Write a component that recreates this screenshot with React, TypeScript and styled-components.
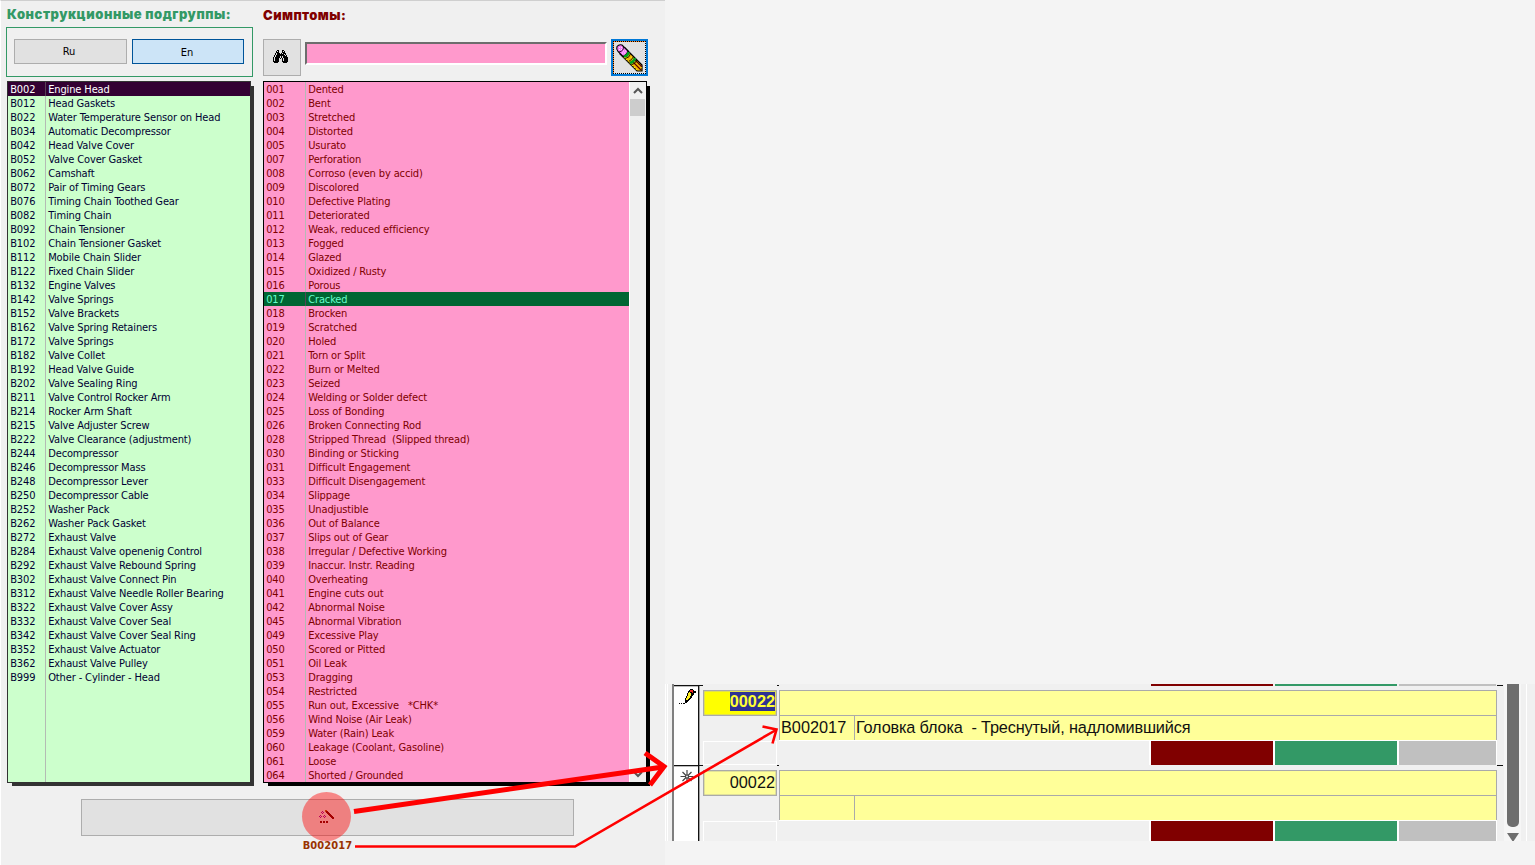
import React from 'react';
import styled, { createGlobalStyle } from 'styled-components';

const Global = createGlobalStyle`
  * { box-sizing: border-box; }
  body { margin: 0; background: #f4f4f4; overflow: hidden; }
`;

const ui = `'DejaVu Sans Condensed', 'DejaVu Sans', sans-serif`;

const Screen = styled.div`
  position: relative;
  display: flex;
  width: 1535px;
  height: 865px;
  overflow: hidden;
  background: #f4f4f4;
  font-family: ${ui};
  font-size: 11px;
  letter-spacing: -0.13px;
`;

const Dialog = styled.main`
  width: 665px;
  height: 865px;
  flex: none;
  background: #f0f0f0;
  border-top: 1px solid #cfcfcf;
  border-left: 1px solid #fff;
  display: flex;
  flex-direction: column;
`;

const Columns = styled.div`
  display: flex;
  gap: 10px;
  padding: 6px 0 0 5px;
`;

const Column = styled.section<{ $width: number }>`
  width: ${p => p.$width}px;
  display: flex;
  flex-direction: column;
`;

const Title = styled.h2<{ $color: string; $inset?: number; $drop?: number; $spacing: number }>`
  margin: 0;
  padding: ${p => p.$drop ?? 0}px 0 0 ${p => p.$inset ?? 0}px;
  height: 20px;
  font: 900 13px/15px Inter, sans-serif;
  letter-spacing: ${p => p.$spacing}px;
  color: ${p => p.$color};
  white-space: nowrap;
`;

const Languages = styled.div`
  height: 50px;
  border: 1px solid #339966;
  padding: 11px 8px 0 7px;
  display: flex;
  gap: 5px;
`;

const LangButton = styled.button<{ $active?: boolean }>`
  flex: ${p => (p.$active ? '0 0 112px' : '0 0 113px')};
  height: 25px;
  padding: ${p => (p.$active ? '1px 2px 0 0' : '0 3px 0 0')};
  font: 11px ${ui};
  color: #000;
  background: ${p => (p.$active ? '#cce4f7' : '#e1e1e1')};
  border: 1px solid ${p => (p.$active ? '#005499' : '#adadad')};
`;

const SearchBar = styled.div`
  display: flex;
  align-items: flex-start;
  height: 42px;
  margin-top: 12px;
`;

const ToolButton = styled.button<{ $focused?: boolean }>`
  width: 38px;
  height: 37px;
  padding: 0 4px 3px 0;
  display: grid;
  place-items: center;
  background: #e1e1e1;
  border: ${p => (p.$focused ? '2px solid #0078d7' : '1px solid #adadad')};
  ${p => p.$focused && `
    width: 37px;
    padding: 0;
    outline: 1px dotted #000;
    outline-offset: -3px;
    box-shadow: inset 1px 1px 0 #ff8728;
  `}
`;

const SearchInput = styled.input`
  width: 302px;
  height: 23px;
  margin: 3px 4px 0;
  padding: 0;
  background: #ff99cc;
  border: 2px solid;
  border-color: #6d6d6d #fff #fff #6d6d6d;
`;

const List = styled.div<{ $bg: string; $edge: string; $width: number; $left?: boolean }>`
  display: flex;
  width: ${p => p.$width}px;
  height: 702px;
  margin: ${p => (p.$left ? '4px 0 0 1px' : '0')};
  background: ${p => p.$bg};
  border: 1px solid ${p => p.$edge};
  box-shadow: 4px 4px 0 -1px ${p => p.$edge};
`;

const Rows = styled.div<{ $code: number }>`
  flex: 1;
  display: grid;
  grid-template-columns: ${p => p.$code}px 1fr;
  grid-auto-rows: 14px;
  align-content: start;
  background: linear-gradient(#b4bbb4, #b4bbb4) ${p => p.$code - 1}px 0 / 1px 100% no-repeat;
`;

const Cell = styled.span<{ $ink: string; $fill?: string }>`
  padding: 1px 0 0 2.2px;
  line-height: 14px;
  height: 14px;
  white-space: pre;
  color: ${p => p.$ink};
  background: ${p => p.$fill ?? 'transparent'};
  &:nth-child(odd) { border-right: 1px solid ${p => (p.$fill ? '#554455' : 'transparent')}; }
`;

const Scrollbar = styled.div`
  width: 17px;
  background: #f0f0f0;
  border-left: 1px solid #fff;
  display: flex;
  flex-direction: column;
  justify-content: space-between;
`;

const Thumb = styled.div`
  height: 17px;
  margin: 17px 1px auto 0;
  background: #cdcdcd;
`;

const ScrollArrow = styled.svg`
  display: block;
  width: 16px;
  height: 17px;
  margin-bottom: -17px;
  &:last-child { margin-bottom: 0; }
`;

const Footer = styled.footer`
  display: flex;
  flex-direction: column;
  width: 493px;
  margin: 16px 0 0 80px;
`;

const ApplyButton = styled.button`
  height: 37px;
  padding: 0 2px 0 0;
  background: #e1e1e1;
  border: 1px solid #adadad;
`;

const ApplyCode = styled.strong`
  padding: 3px 0 0 0;
  line-height: 14px;
  text-align: center;
  color: #993300;
  letter-spacing: 0.1px;
`;

const Overlay = styled.svg`
  position: absolute;
  inset: 0;
  pointer-events: none;
`;

const Grid = styled.section`
  width: 870px;
  height: 157px;
  margin-top: 684px;
  overflow: hidden;
  display: flex;
  background: #f0f0f0;
  font: 16.3px 'Liberation Sans', sans-serif;
  letter-spacing: 0;
`;

const Gutter = styled.div`
  width: 9px;
  border-left: 1px solid #fff;
  border-right: 2px solid #808080;
  background: linear-gradient(90deg, #f0f0f0 0 1px, #fff 1px 2px, #f0f0f0 2px);
`;

const Records = styled.div`
  width: 829px;
  flex: none;
`;

const Strip = styled.div`
  height: 1px;
  display: grid;
  grid-template-columns: 122px 122px 97px;
  column-gap: 2px;
  padding-left: 477px;
`;

const StripFill = styled.span<{ $fill: string }>`
  height: 2px;
  background: ${p => p.$fill};
`;

const Record = styled.div`
  height: 80px;
  display: grid;
  grid-template-columns: 25px 4px 74px 2px 718px 6px;
`;

const Marker = styled.div`
  background: #fff;
  border-top: 1.5px solid #111;
  border-right: 1px solid #111;
  box-shadow: 0.4px 0 0 #222, 0 1px 0 #bbb inset;
  padding-left: 3px;
`;

const Tick = styled.div`
  height: 1px;
  background: #111;
`;

const NumberCol = styled.div`
  padding-top: 5px;
`;

const NumberBox = styled.div<{ $editing?: boolean }>`
  height: 26px;
  padding: ${p => (p.$editing ? '1px 1px 0 0' : '2px 1px 0 0')};
  text-align: right;
  line-height: 19px;
  color: #111;
  border: 1px solid #aaa;
  box-shadow: inset 0 0 0 0.5px #c4c49a;
  background: ${p => (p.$editing ? '#ffff00' : '#ffff99')};
`;

const Selection = styled.span`
  display: inline-block;
  height: 19px;
  font-weight: bold;
  color: #ffff33;
  background: #2e3192;
`;

const EmptyBox = styled.div`
  height: 24px;
  margin-top: 25px;
  border: 1px solid #fff;
`;

const Body = styled.div`
  padding-top: 5px;
`;

const Line = styled.div`
  height: 26px;
  background: #ffff99;
  border: 1px solid #aaa;
`;

const Detail = styled.div`
  height: 24px;
  display: grid;
  grid-template-columns: 74px 1fr;
  line-height: 22px;
  white-space: pre;
  color: #111;
  background: #ffff99;
  border: solid #aaa;
  border-width: 0 1px;
`;

const DetailCell = styled.span`
  padding-left: 1px;
  & + & {
    border-left: 1px solid #aaa;
    letter-spacing: -0.16px;
  }
`;

const Totals = styled.div`
  height: 25px;
  display: grid;
  grid-template-columns: 370px 122px 122px 97px;
  column-gap: 2px;
  padding-top: 1px;
  background: #fff;
`;

const Total = styled.div<{ $fill: string }>`
  background: ${p => p.$fill};
`;

const GridScroll = styled.div`
  width: 17px;
  margin-left: 1px;
  padding: 0 2px 0 3px;
  background: #f6f6f6;
  display: flex;
  flex-direction: column;
  gap: 6px;
`;

const GridThumb = styled.div`
  height: 143px;
  border-radius: 0 0 5px 5px;
  background: #6e6e6e;
`;

const GridEdge = styled.div`
  width: 6px;
  border-right: 1px solid #fff;
`;

const inks: Record<string, string> = {
  '#': '#000', o: '#a05a10', r: '#e82020', Y: '#ffee22', m: '#880099', d: '#600000',
};

function Pixels({ art, x = 0, y = 0, size = 1 }: { art: string[]; x?: number; y?: number; size?: number }) {
  return (
    <g shapeRendering="crispEdges" transform={`translate(${x} ${y}) scale(${size})`}>
      {art.flatMap((row, j) =>
        [...row].map((c, i) => (inks[c] ? <rect key={`${i}-${j}`} x={i} y={j} width="1" height="1" fill={inks[c]} /> : null)),
      )}
    </g>
  );
}

const binoculars = [
  '....##...##....',
  '...#.#...#.#...',
  '...###...###...',
  '..#.###.#.###..',
  '..#.#######.#..',
  '.#.#########.#.',
  '.#.####.#.####.',
  '#.#####.#.#####',
  '#.####.#.#.####',
  '#.####...#.####',
  '#.####...#.####',
  '######...######',
  '.####.....####.',
];

const pencilMark = [
  '..........###..',
  '.........#rrr#.',
  '........##rrr##',
  '........#Y##r##',
  '.......#YYY###.',
  '.......#YYY##..',
  '......#YYY##...',
  '......#YYY##...',
  '.....#YYY##....',
  '.....#YY##.....',
  '.....####......',
  '.....###.......',
  '.....##........',
  '#.#.#..........',
];

const wand = [
  '......oo........',
  '...m..odd.......',
  '..m.m..ddd......',
  '...m....ddd.....',
  '.........ddd....',
  '.m...m....ddd...',
  'm.m.m.m....ddd..',
  '.m...m......ddd.',
  '.............dd.',
  '................',
  '................',
  '.dd.dd.dd.......',
  '.dd.dd.dd.......',
];

function EraserPencil() {
  return (
    <svg width="29" height="30" viewBox="0 0 29 30">
      <path d="M10 5 27 22V28H22L5 11Z" fill="#f2b400" stroke="#000" strokeWidth="1.2" />
      <path d="M7 12 23 28M10 8 27 25" stroke="#ffe400" strokeWidth="1.2" strokeDasharray="1.4 1.4" />
      <path d="M18 19 26 27M20 17 27 24" stroke="#600000" strokeWidth="1.1" />
      <path d="M3 8.500Q1 6 2 3.500Q4 1 7 2L13 8Q12 12 8 13.500Z" fill="#f77cf7" stroke="#000" strokeWidth="1.1" />
      <path d="M4 4.500h3M4 6.500h3M8 8h3M7 10h3" stroke="#ffe0ff" strokeDasharray="1 1" />
      <path d="M8.500 3.500Q9 8 4 9" fill="none" stroke="#000" strokeWidth=".8" />
      <path d="M9 13.500Q13 13 13.500 9M15 20Q19 19 20 15" fill="none" stroke="#00a020" strokeWidth="2.600" />
      <path d="M10.500 15.500Q15 14.500 15.500 10.500M13.500 18.500Q17 17 18.500 13.500M16.500 22Q20.500 20.500 22 17" fill="none" stroke="#000" strokeWidth=".8" />
    </svg>
  );
}

const parse = (text: string) => text.split('\n').map(line => line.split('|'));

const groups = parse(`B002|Engine Head
B012|Head Gaskets
B022|Water Temperature Sensor on Head
B034|Automatic Decompressor
B042|Head Valve Cover
B052|Valve Cover Gasket
B062|Camshaft
B072|Pair of Timing Gears
B076|Timing Chain Toothed Gear
B082|Timing Chain
B092|Chain Tensioner
B102|Chain Tensioner Gasket
B112|Mobile Chain Slider
B122|Fixed Chain Slider
B132|Engine Valves
B142|Valve Springs
B152|Valve Brackets
B162|Valve Spring Retainers
B172|Valve Springs
B182|Valve Collet
B192|Head Valve Guide
B202|Valve Sealing Ring
B211|Valve Control Rocker Arm
B214|Rocker Arm Shaft
B215|Valve Adjuster Screw
B222|Valve Clearance (adjustment)
B244|Decompressor
B246|Decompressor Mass
B248|Decompressor Lever
B250|Decompressor Cable
B252|Washer Pack
B262|Washer Pack Gasket
B272|Exhaust Valve
B284|Exhaust Valve openenig Control
B292|Exhaust Valve Rebound Spring
B302|Exhaust Valve Connect Pin
B312|Exhaust Valve Needle Roller Bearing
B322|Exhaust Valve Cover Assy
B332|Exhaust Valve Cover Seal
B342|Exhaust Valve Cover Seal Ring
B352|Exhaust Valve Actuator
B362|Exhaust Valve Pulley
B999|Other - Cylinder - Head`);

const symptoms = parse(`001|Dented
002|Bent
003|Stretched
004|Distorted
005|Usurato
007|Perforation
008|Corroso (even by accid)
009|Discolored
010|Defective Plating
011|Deteriorated
012|Weak, reduced efficiency
013|Fogged
014|Glazed
015|Oxidized / Rusty
016|Porous
017|Cracked
018|Brocken
019|Scratched
020|Holed
021|Torn or Split
022|Burn or Melted
023|Seized
024|Welding or Solder defect
025|Loss of Bonding
026|Broken Connecting Rod
028|Stripped Thread  (Slipped thread)
030|Binding or Sticking
031|Difficult Engagement
033|Difficult Disengagement
034|Slippage
035|Unadjustible
036|Out of Balance
037|Slips out of Gear
038|Irregular / Defective Working
039|Inaccur. Instr. Reading
040|Overheating
041|Engine cuts out
042|Abnormal Noise
045|Abnormal Vibration
049|Excessive Play
050|Scored or Pitted
051|Oil Leak
053|Dragging
054|Restricted
055|Run out, Excessive   *CHK*
056|Wind Noise (Air Leak)
059|Water (Rain) Leak
060|Leakage (Coolant, Gasoline)
061|Loose
064|Shorted / Grounded`);

interface CodeRowsProps { data: string[][]; code: number; ink: string; selected: string; selInk: string; selFill: string }

function CodeRows({ data, code, ink, selected, selInk, selFill }: CodeRowsProps) {
  return (
    <Rows $code={code}>
      {data.map(([id, name]) => {
        const on = id === selected;
        return (
          <React.Fragment key={id}>
            <Cell $ink={on ? selInk : ink} $fill={on ? selFill : undefined}>{id}</Cell>
            <Cell $ink={on ? selInk : ink} $fill={on ? selFill : undefined}>{name}</Cell>
          </React.Fragment>
        );
      })}
    </Rows>
  );
}

function GridRecord({ editing, code, text }: { editing?: boolean; code?: string; text?: string }) {
  return (
    <Record>
      <Marker>
        <svg width="20" height="30">
          {editing ? (
            <Pixels art={pencilMark} x={2} y={3} size={1.1} />
          ) : (
            <g stroke="#444" strokeWidth="1.2">
              <path d="M10 4v13M3.500 10.500h13M5.500 6l9 9M14.500 6l-9 9" />
              <circle cx="10" cy="10.500" r="1.500" fill="#fff" />
            </g>
          )}
        </svg>
      </Marker>
      <Tick />
      <NumberCol>
        <NumberBox $editing={editing}>{editing ? <Selection>00022</Selection> : '00022'}</NumberBox>
        <EmptyBox />
      </NumberCol>
      <Tick />
      <Body>
        <Line />
        <Detail>
          <DetailCell>{code}</DetailCell>
          <DetailCell>{text}</DetailCell>
        </Detail>
        <Totals>
          <Total $fill="#f0f0f0" />
          <Total $fill="#800000" />
          <Total $fill="#339966" />
          <Total $fill="#c0c0c0" />
        </Totals>
      </Body>
      <Tick />
    </Record>
  );
}

export default function App() {
  return (
    <>
      <Global />
      <Screen>
        <Dialog>
          <Columns>
            <Column $width={247}>
              <Title $color="#339966" $inset={1} $spacing={0.53}>Конструкционные подгруппы:</Title>
              <Languages>
                <LangButton>Ru</LangButton>
                <LangButton $active>En</LangButton>
              </Languages>
              <List $left $bg="#ccffcc" $edge="#333333" $width={244}>
                <CodeRows data={groups} code={38} ink="#000033" selected="B002" selInk="#fff" selFill="#330033" />
              </List>
            </Column>
            <Column $width={388}>
              <Title $color="#800000" $drop={1} $spacing={0.42}>Симптомы:</Title>
              <SearchBar>
                <ToolButton aria-label="Search">
                  <svg width="15" height="13"><Pixels art={binoculars} /></svg>
                </ToolButton>
                <SearchInput />
                <ToolButton $focused aria-label="Clear"><EraserPencil /></ToolButton>
              </SearchBar>
              <List $bg="#ff99cc" $edge="#000" $width={384}>
                <CodeRows data={symptoms} code={42} ink="#800000" selected="017" selInk="#66ffcc" selFill="#006633" />
                <Scrollbar>
                  <ScrollArrow><path d="M4 11l4-4 4 4" fill="none" stroke="#555" strokeWidth="2" /></ScrollArrow>
                  <Thumb />
                  <ScrollArrow><path d="M4 7l4 4 4-4" fill="none" stroke="#555" strokeWidth="2" /></ScrollArrow>
                </Scrollbar>
              </List>
            </Column>
          </Columns>
          <Footer>
            <ApplyButton aria-label="Apply">
              <svg width="16" height="13"><Pixels art={wand} /></svg>
            </ApplyButton>
            <ApplyCode>B002017</ApplyCode>
          </Footer>
        </Dialog>
        <Grid>
          <Gutter />
          <Records>
            <Strip>
              <StripFill $fill="#800000" />
              <StripFill $fill="#339966" />
              <StripFill $fill="#c0c0c0" />
            </Strip>
            <GridRecord editing code="B002017" text="Головка блока  - Треснутый, надломившийся" />
            <GridRecord />
          </Records>
          <GridScroll>
            <GridThumb />
            <svg width="12" height="8"><path d="M0 0h12L6 9z" fill="#6e6e6e" /></svg>
          </GridScroll>
          <GridEdge />
        </Grid>
        <Overlay width="1535" height="865" fill="none" stroke="#ff0000">
          <circle cx="326.500" cy="816.500" r="24.500" fill="#ff0000" fillOpacity=".43" stroke="none" />
          <path d="M354 811.500 663 767" strokeWidth="5" />
          <path d="M645 753 664 766.500 650 785" strokeWidth="5" />
          <path d="M355 846.500H575L776 730" strokeWidth="2.600" />
          <path d="M762.500 726.500 776.500 729.500 772.500 743.500" strokeWidth="2.600" />
        </Overlay>
      </Screen>
    </>
  );
}
